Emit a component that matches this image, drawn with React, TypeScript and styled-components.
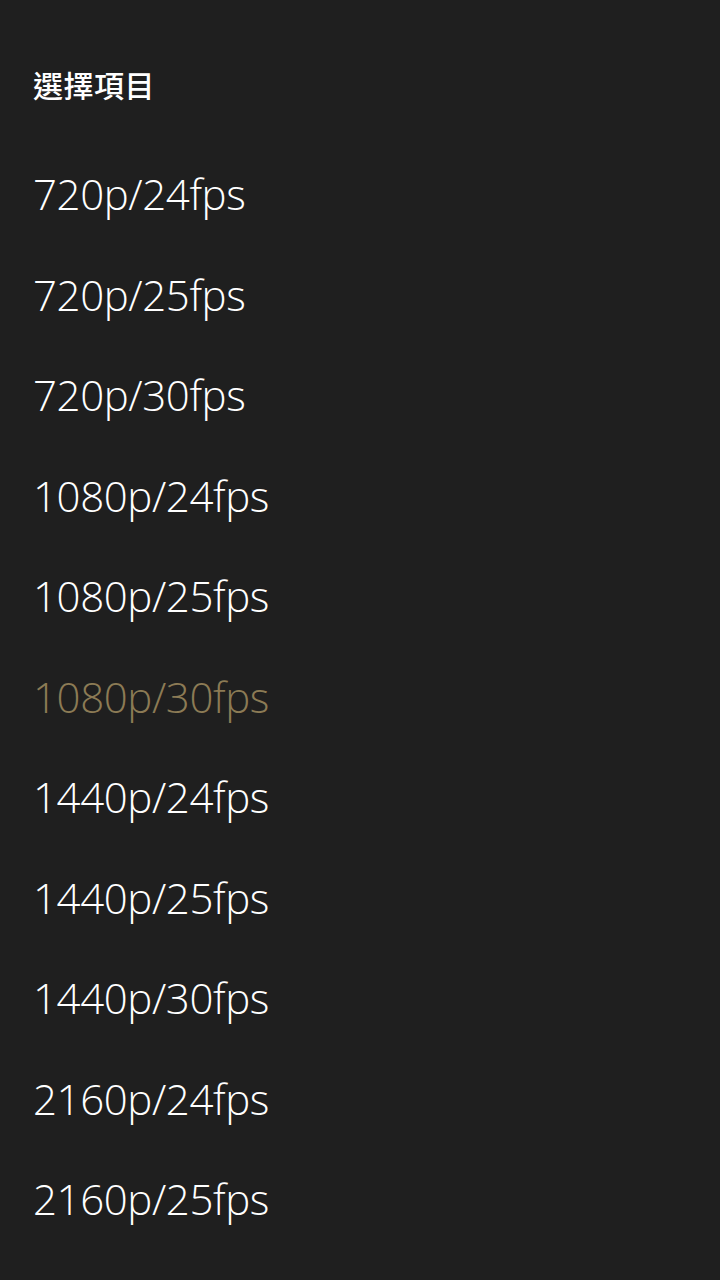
import React from "react";
import styled, { createGlobalStyle } from "styled-components";

const Global = createGlobalStyle`
  html, body { margin: 0; padding: 0; background: #1f1f1f; }
  #root { min-height: 1280px; }
`;

const Page = styled.div`
  width: 720px;
  min-height: 1280px;
  box-sizing: border-box;
  background: #1f1f1f;
  padding: 64px 0 0 33px;
  overflow: hidden;
`;

const Title = styled.h1`
  margin: 0;
  height: 40px;
  line-height: 40px;
  font-family: "Noto Sans CJK TC", "Noto Sans", sans-serif;
  font-weight: 500;
  font-size: 30px;
  letter-spacing: 0.5px;
  color: #ffffff;
`;

const List = styled.ul`
  list-style: none;
  margin: 40px 0 0 0;
  padding: 0;
  display: flex;
  flex-direction: column;
`;

const Item = styled.li<{ $selected?: boolean }>`
  height: 100.5px;
  line-height: 100.5px;
  font-family: "Open Sans", "Noto Sans", sans-serif;
  font-weight: 300;
  font-size: 42px;
  letter-spacing: -0.4px;
  color: ${(p) => (p.$selected ? "#8c7b55" : "#ffffff")};
  white-space: nowrap;
`;

const options = [
  "720p/24fps",
  "720p/25fps",
  "720p/30fps",
  "1080p/24fps",
  "1080p/25fps",
  "1080p/30fps",
  "1440p/24fps",
  "1440p/25fps",
  "1440p/30fps",
  "2160p/24fps",
  "2160p/25fps",
];

export default function App() {
  return (
    <>
      <Global />
      <Page>
        <Title>選擇項目</Title>
        <List>
          {options.map((o) => (
            <Item key={o} $selected={o === "1080p/30fps"}>
              {o}
            </Item>
          ))}
        </List>
      </Page>
    </>
  );
}
